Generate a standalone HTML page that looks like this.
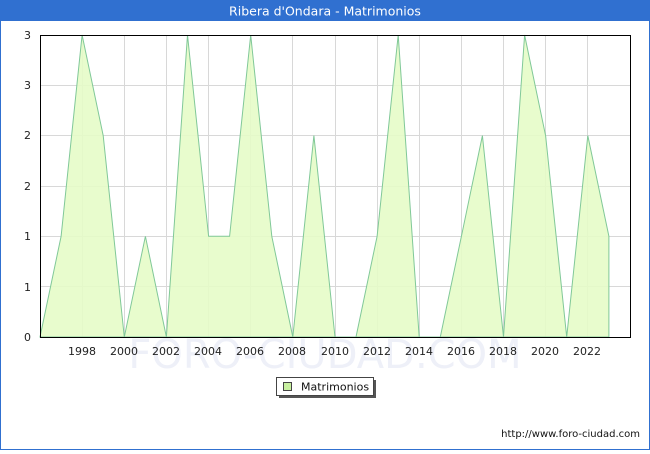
<!DOCTYPE html>
<html><head><meta charset="utf-8"><style>
html,body{margin:0;padding:0;background:#fff}
body{width:650px;height:450px;overflow:hidden;font-family:"DejaVu Sans","Liberation Sans",sans-serif}
</style></head><body>
<svg width="650" height="450" xmlns="http://www.w3.org/2000/svg" font-family="DejaVu Sans, Liberation Sans, sans-serif">
<rect x="0.5" y="0.5" width="649" height="449" fill="#fff" stroke="#3070d0"/>
<rect x="0" y="0" width="650" height="21" fill="#3070d0"/>
<text x="325" y="15.5" font-size="12.5" fill="#fff" text-anchor="middle">Ribera d'Ondara - Matrimonios</text>
<text x="325" y="368" font-size="40" fill="#eef0f8" text-anchor="middle">FORO-CIUDAD.COM</text>
<g stroke="#d8d8d8" stroke-width="1">
<line x1="40" y1="85.5" x2="630" y2="85.5"/><line x1="40" y1="135.5" x2="630" y2="135.5"/><line x1="40" y1="186.5" x2="630" y2="186.5"/><line x1="40" y1="236.5" x2="630" y2="236.5"/><line x1="40" y1="286.5" x2="630" y2="286.5"/>
<line x1="82.5" y1="35" x2="82.5" y2="337"/><line x1="124.5" y1="35" x2="124.5" y2="337"/><line x1="166.5" y1="35" x2="166.5" y2="337"/><line x1="208.5" y1="35" x2="208.5" y2="337"/><line x1="250.5" y1="35" x2="250.5" y2="337"/><line x1="292.5" y1="35" x2="292.5" y2="337"/><line x1="335.5" y1="35" x2="335.5" y2="337"/><line x1="377.5" y1="35" x2="377.5" y2="337"/><line x1="419.5" y1="35" x2="419.5" y2="337"/><line x1="461.5" y1="35" x2="461.5" y2="337"/><line x1="503.5" y1="35" x2="503.5" y2="337"/><line x1="545.5" y1="35" x2="545.5" y2="337"/><line x1="587.5" y1="35" x2="587.5" y2="337"/>
</g>
<polygon fill="#e6fcc8" fill-opacity="0.9" stroke="#80c898" stroke-width="1" points="40,337 61.1,236.3 82.1,35 103.2,135.6 124.3,337 145.4,236.3 166.4,337 187.5,35 208.6,236.3 229.6,236.3 250.7,35 271.8,236.3 292.8,337 313.9,135.6 335,337 356,337 377.1,236.3 398.2,35 419.2,337 440.3,337 461.4,236.3 482.4,135.6 503.5,337 524.6,35 545.6,135.6 566.7,337 587.8,135.6 608.9,236.3 608.9,337"/>
<rect x="40.5" y="35.5" width="590" height="302" fill="none" stroke="#000"/>
<g font-size="11" fill="#222" text-anchor="end">
<text x="31" y="341">0</text><text x="31" y="291">1</text><text x="31" y="240">1</text><text x="31" y="190">2</text><text x="31" y="139">2</text><text x="31" y="89">3</text><text x="31" y="39">3</text>
</g>
<g font-size="11" fill="#222" text-anchor="middle">
<text x="82" y="355">1998</text><text x="124" y="355">2000</text><text x="166" y="355">2002</text><text x="208" y="355">2004</text><text x="250" y="355">2006</text><text x="292" y="355">2008</text><text x="335" y="355">2010</text><text x="377" y="355">2012</text><text x="419" y="355">2014</text><text x="461" y="355">2016</text><text x="503" y="355">2018</text><text x="545" y="355">2020</text><text x="587" y="355">2022</text>
</g>
<rect x="279" y="380" width="97" height="18" fill="#555"/>
<rect x="276.5" y="377.5" width="97" height="18" fill="#fff" stroke="#444"/>
<rect x="283.5" y="382.5" width="8" height="8" fill="#c8f0a0" stroke="#444"/>
<text x="301" y="390.5" font-size="11" fill="#111">Matrimonios</text>
<text x="640" y="437" font-size="10" fill="#111" text-anchor="end">http://www.foro-ciudad.com</text>
</svg>
</body></html>
